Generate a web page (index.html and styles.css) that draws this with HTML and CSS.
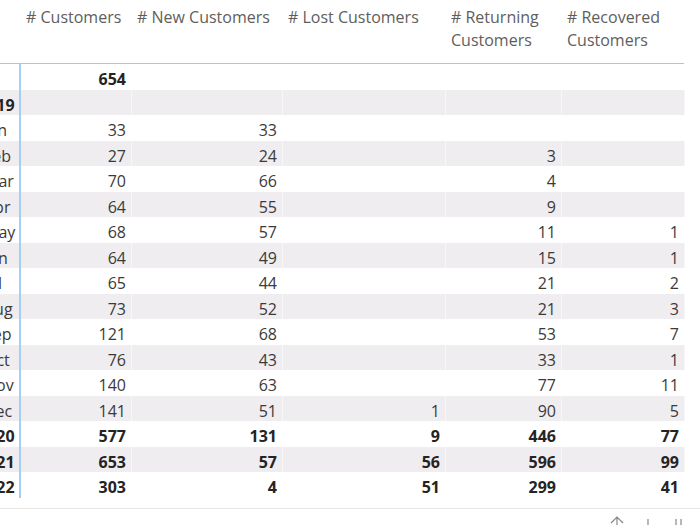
FILE: index.html
```html
<!DOCTYPE html>
<html>
<head>
<meta charset="utf-8">
<link rel="stylesheet" href="styles.css">
</head>
<body>
<div class="matrix">
  <div class="row head">
    <div class="lbl"></div>
    <div class="hc"># Customers</div>
    <div class="hc"># New Customers</div>
    <div class="hc"># Lost Customers</div>
    <div class="hc"># Returning Customers</div>
    <div class="hc"># Recovered Customers</div>
  </div>
  <div class="body">
    <div class="row bold"><div class="lbl"><span></span></div><div class="c">654</div><div class="c"></div><div class="c"></div><div class="c"></div><div class="c"></div></div>
    <div class="row bold alt"><div class="lbl"><span>2019</span></div><div class="c"></div><div class="c"></div><div class="c"></div><div class="c"></div><div class="c"></div></div>
    <div class="row"><div class="lbl"><span>Jan</span></div><div class="c">33</div><div class="c">33</div><div class="c"></div><div class="c"></div><div class="c"></div></div>
    <div class="row alt"><div class="lbl"><span>Feb</span></div><div class="c">27</div><div class="c">24</div><div class="c"></div><div class="c">3</div><div class="c"></div></div>
    <div class="row"><div class="lbl"><span>Mar</span></div><div class="c">70</div><div class="c">66</div><div class="c"></div><div class="c">4</div><div class="c"></div></div>
    <div class="row alt"><div class="lbl"><span>Apr</span></div><div class="c">64</div><div class="c">55</div><div class="c"></div><div class="c">9</div><div class="c"></div></div>
    <div class="row"><div class="lbl"><span>May</span></div><div class="c">68</div><div class="c">57</div><div class="c"></div><div class="c">11</div><div class="c">1</div></div>
    <div class="row alt"><div class="lbl"><span>Jun</span></div><div class="c">64</div><div class="c">49</div><div class="c"></div><div class="c">15</div><div class="c">1</div></div>
    <div class="row"><div class="lbl"><span>Jul</span></div><div class="c">65</div><div class="c">44</div><div class="c"></div><div class="c">21</div><div class="c">2</div></div>
    <div class="row alt"><div class="lbl"><span>Aug</span></div><div class="c">73</div><div class="c">52</div><div class="c"></div><div class="c">21</div><div class="c">3</div></div>
    <div class="row"><div class="lbl"><span>Sep</span></div><div class="c">121</div><div class="c">68</div><div class="c"></div><div class="c">53</div><div class="c">7</div></div>
    <div class="row alt"><div class="lbl"><span>Oct</span></div><div class="c">76</div><div class="c">43</div><div class="c"></div><div class="c">33</div><div class="c">1</div></div>
    <div class="row"><div class="lbl"><span>Nov</span></div><div class="c">140</div><div class="c">63</div><div class="c"></div><div class="c">77</div><div class="c">11</div></div>
    <div class="row alt"><div class="lbl"><span>Dec</span></div><div class="c">141</div><div class="c">51</div><div class="c">1</div><div class="c">90</div><div class="c">5</div></div>
    <div class="row bold"><div class="lbl"><span>2020</span></div><div class="c">577</div><div class="c">131</div><div class="c">9</div><div class="c">446</div><div class="c">77</div></div>
    <div class="row bold alt"><div class="lbl"><span>2021</span></div><div class="c">653</div><div class="c">57</div><div class="c">56</div><div class="c">596</div><div class="c">99</div></div>
    <div class="row bold"><div class="lbl"><span>2022</span></div><div class="c">303</div><div class="c">4</div><div class="c">51</div><div class="c">299</div><div class="c">41</div></div>
  </div>
</div>
<div class="footer">
  <svg class="icons" width="90" height="10" viewBox="0 0 90 10">
    <path d="M12 11 V2 M6 8 L12 2 L18 8" fill="none" stroke="#8a8886" stroke-width="1.2"/>
    <path d="M43 4 V11" stroke="#8a8886" stroke-width="1.2"/>
    <path d="M71 4 V11 M76 4 V11" stroke="#8a8886" stroke-width="1.2"/>
  </svg>
</div>
</body>
</html>
```
FILE: styles.css
```css
html, body {
  margin: 0;
  padding: 0;
  background: #ffffff;
}
body {
  font-family: "Open Sans", "Noto Sans", sans-serif;
  font-size: 16px;
  color: #3b3a39;
  width: 700px;
  height: 525px;
  overflow: hidden;
}
.matrix {
  width: 685px;
}
.row {
  display: grid;
  grid-template-columns: 21px 111px 151px 163px 116px 123px;
}
.head {
  height: 63px;
  border-bottom: 1px solid #9fc7ef;
  color: #605e5c;
  line-height: 23px;
  width: 684px;
}
.head .hc {
  padding: 6px 4px 0 5px;
}
.head .lbl {
  border-right: none;
}
.body .row {
  height: 25.5px;
}
.body .row > div {
  box-sizing: border-box;
  padding-top: 5px;
  line-height: 20.5px;
}
.row.alt {
  background: #efedf0;
}
.row.bold {
  font-weight: 700;
  color: #252423;
}
.body .lbl {
  overflow: hidden;
  border-right: 2px solid #a6cdf2;
  white-space: nowrap;
}
.body .lbl span {
  display: inline-block;
  margin-left: -16px;
}
.body .row.bold .lbl span {
  margin-left: -22px;
}
.c {
  text-align: right;
  padding-right: 5px;
  border-right: 1px solid rgba(255, 255, 255, 0.55);
  white-space: nowrap;
}
.footer {
  margin-top: 10px;
  border-top: 1px solid #e6e6e6;
  display: flex;
  justify-content: flex-end;
  padding-right: 5px;
  padding-top: 6px;
}
.icons {
  display: block;
}
```
